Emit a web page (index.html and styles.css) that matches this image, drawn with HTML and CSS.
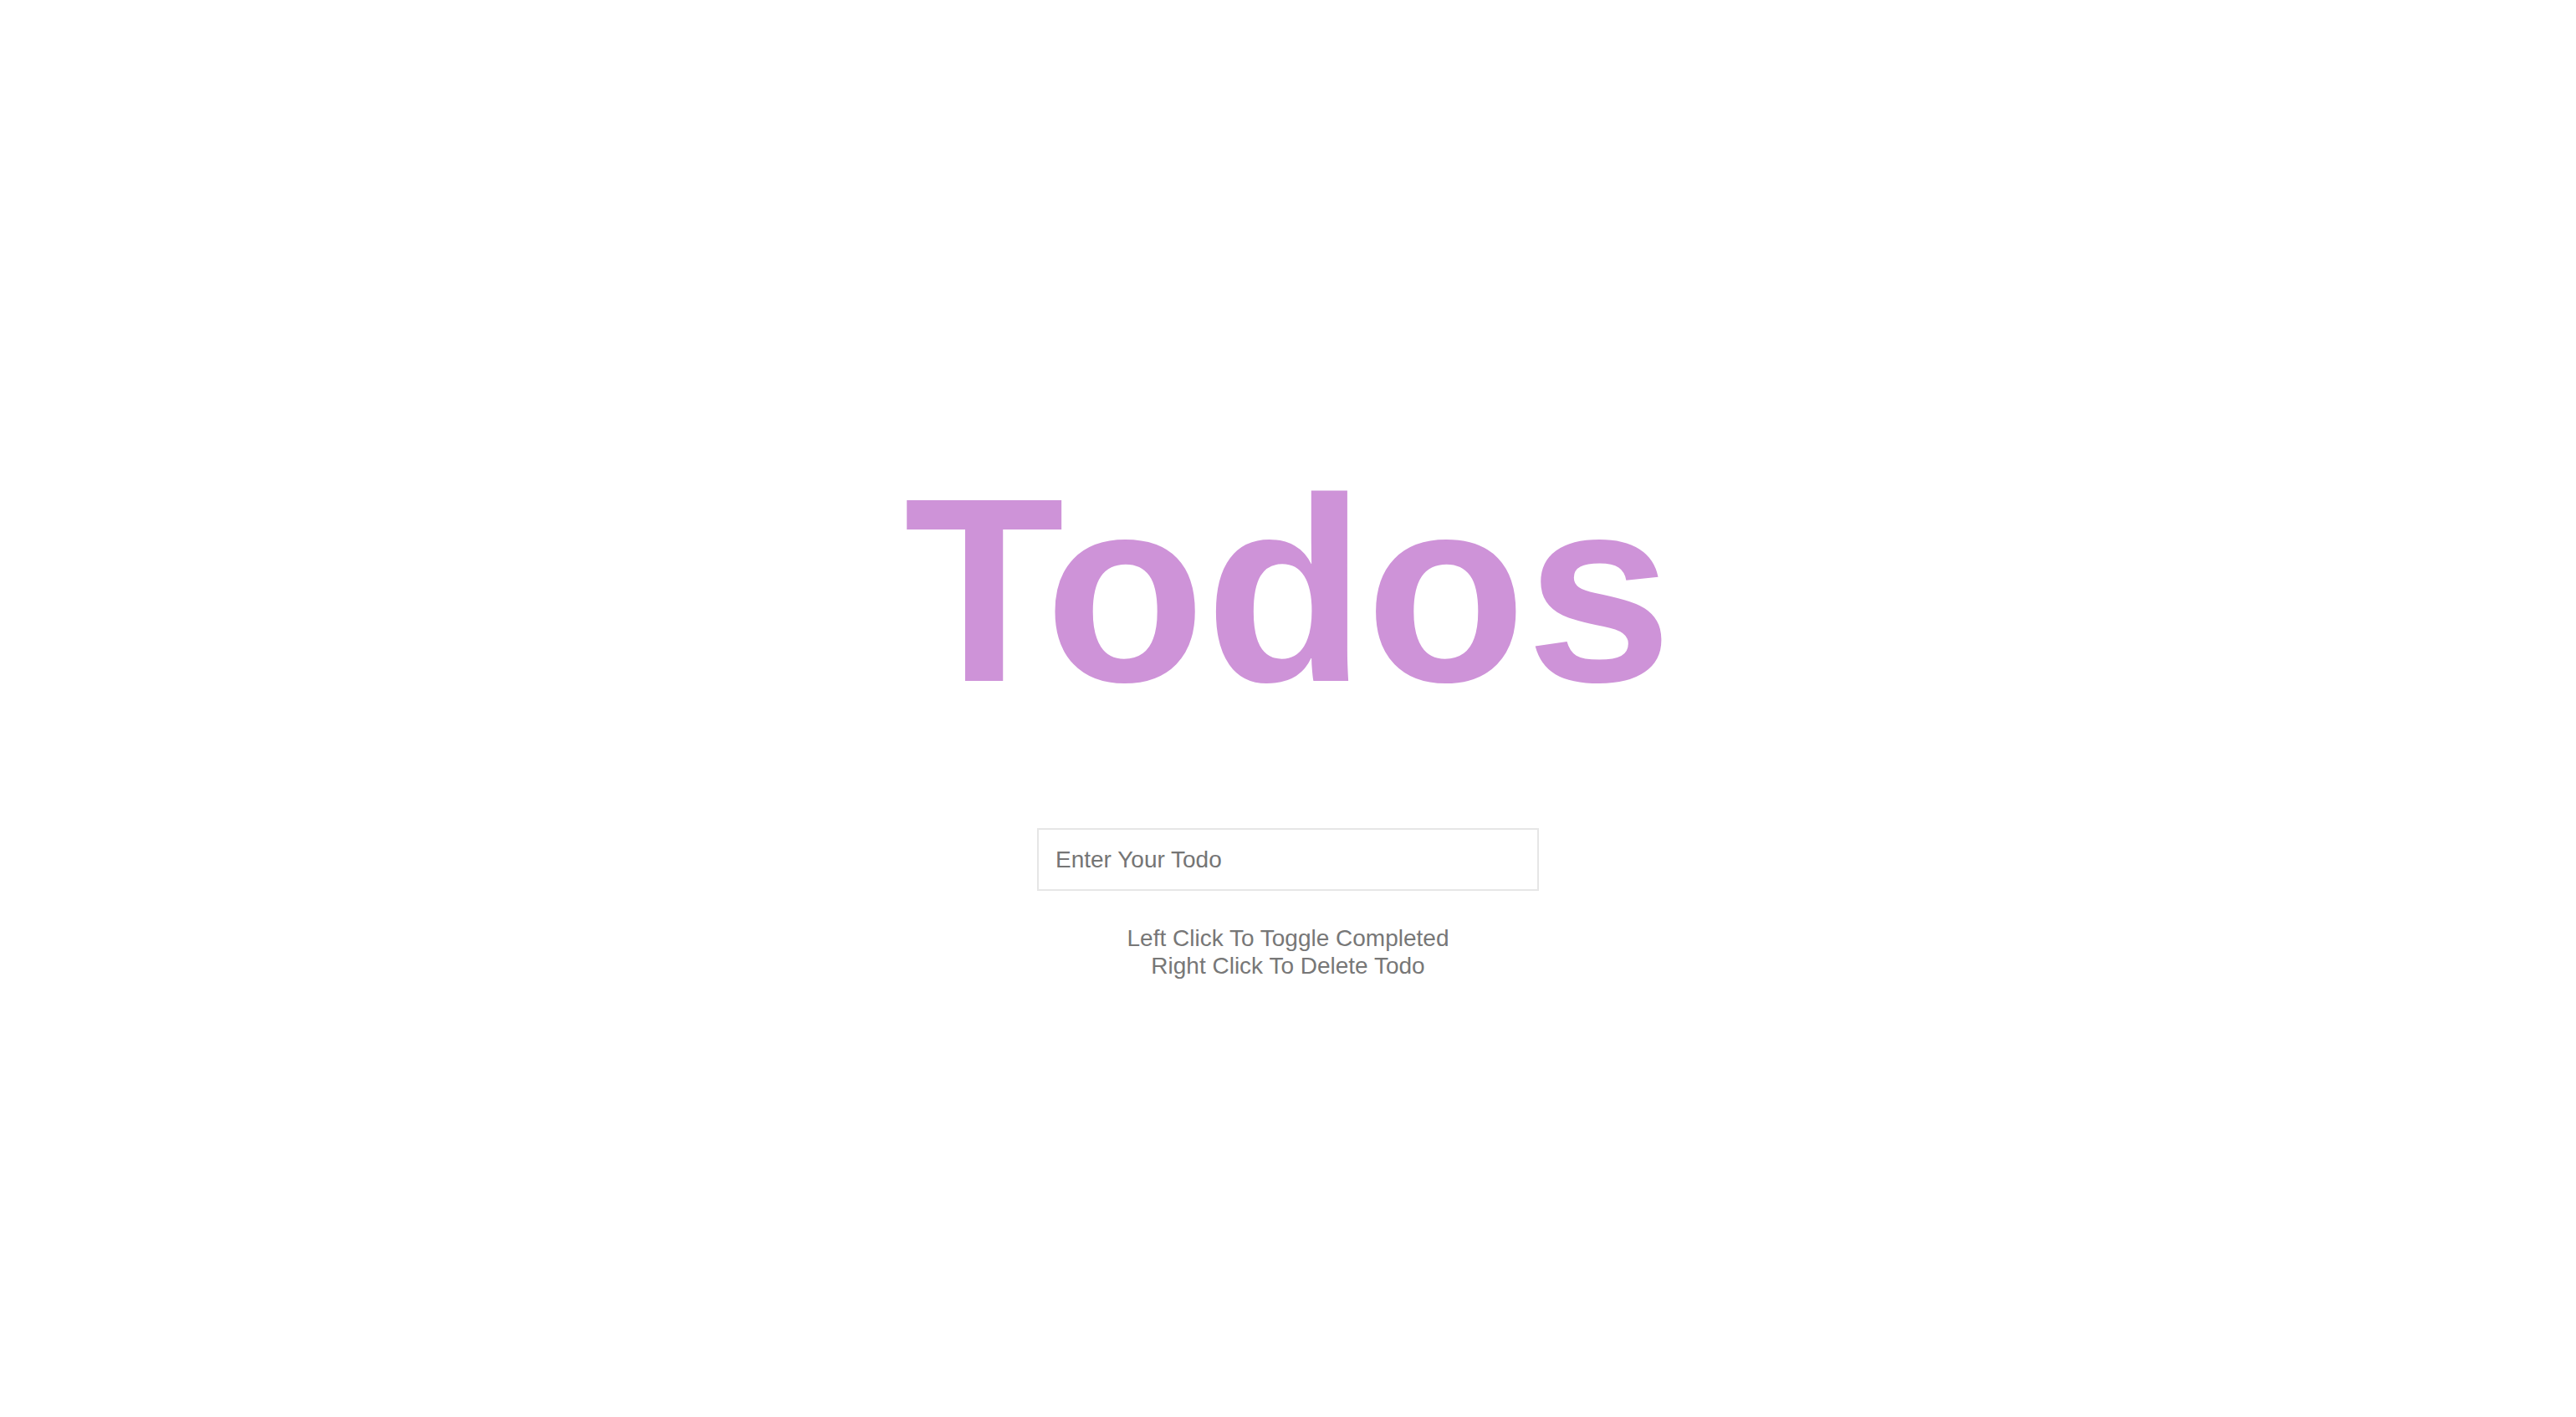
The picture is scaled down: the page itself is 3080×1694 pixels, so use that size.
FILE: index.html
```html
<!DOCTYPE html>
<html lang="en">
<head>
<meta charset="utf-8">
<title>Todos</title>
<link rel="stylesheet" href="styles.css">
</head>
<body>
  <main class="app">
    <h1 class="title">Todos</h1>
    <form class="todo-form">
      <input class="todo-input" type="text" placeholder="Enter Your Todo">
    </form>
    <p class="hint">Left Click To Toggle Completed<br>Right Click To Delete Todo</p>
  </main>
</body>
</html>
```

FILE: styles.css
```css
html, body {
  margin: 0;
  padding: 0;
  background: #ffffff;
}

body {
  font-family: "Liberation Sans", Arial, sans-serif;
}

.app {
  min-height: 100vh;
  display: flex;
  flex-direction: column;
  align-items: center;
  justify-content: center;
  padding-top: 2px;
  box-sizing: border-box;
}

.title {
  margin: 0 0 104px;
  font-family: "Liberation Sans", Arial, sans-serif;
  font-size: 314px;
  font-weight: 700;
  line-height: normal;
  color: #ce93d8;
}

.todo-form {
  margin: 0;
}

.todo-input {
  box-sizing: border-box;
  width: 600px;
  height: 75px;
  margin: 0;
  padding: 0 20px;
  border: 2px solid #e6e6e6;
  border-radius: 0;
  outline: none;
  font-family: "Liberation Sans", Arial, sans-serif;
  font-size: 28px;
  color: #555555;
  background: #ffffff;
}

.todo-input::placeholder {
  color: #757575;
  opacity: 1;
}

.hint {
  margin: 40px 0 0;
  font-family: "Liberation Sans", Arial, sans-serif;
  font-size: 28px;
  line-height: 33px;
  color: #777777;
  text-align: center;
}
```
